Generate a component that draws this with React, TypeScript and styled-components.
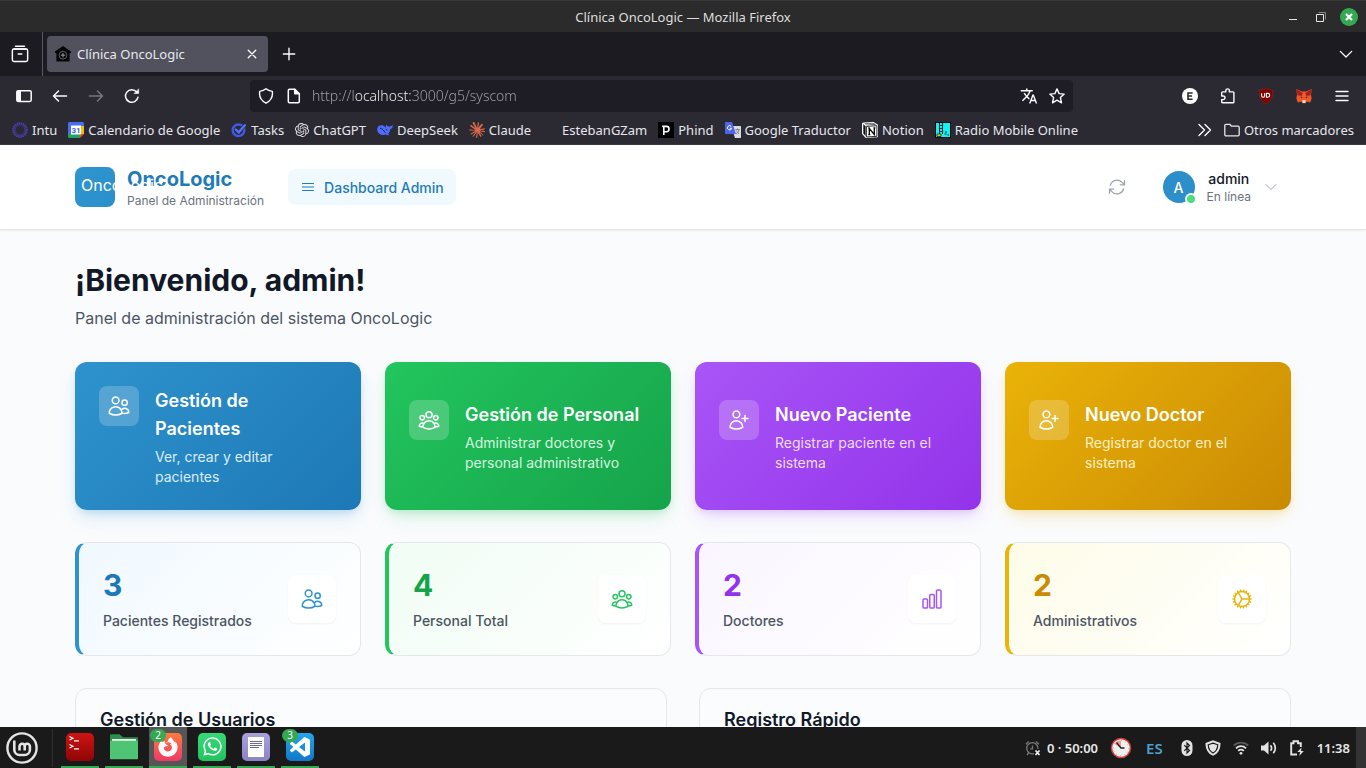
import React from "react";
import styled, { createGlobalStyle, css } from "styled-components";
import {
  HiOutlineArrowPath,
  HiOutlineBars3,
  HiOutlineChartBar,
  HiOutlineChevronDown,
  HiOutlineCog,
  HiOutlineUserGroup,
  HiOutlineUserPlus,
  HiOutlineUsers,
} from "react-icons/hi2";
import { FaFirefoxBrowser, FaWhatsapp } from "react-icons/fa";
import { MdTranslate } from "react-icons/md";
import { SiClaude, SiOpenai } from "react-icons/si";

const Global = createGlobalStyle`
  *, *::before, *::after { box-sizing: border-box; }
  body { margin: 0; background: #fafbfd; }
  button, input { font: inherit; color: inherit; }
  button { padding: 0; border: 0; background: none; cursor: pointer; }
  a { color: inherit; text-decoration: none; }
  h1, h2, h3, p { margin: 0; }
  svg { display: block; flex: none; }
`;

const systemFont = `"Noto Sans", "Open Sans", sans-serif`;

const Desktop = styled.div`
  display: flex;
  flex-direction: column;
  height: 100vh;
  overflow: hidden;
  font-family: ${systemFont};
`;

/* ---------- window title bar ---------- */

const TitleBar = styled.header`
  display: grid;
  grid-template-columns: 1fr auto 1fr;
  align-items: center;
  flex: none;
  height: 32px;
  background: #2b2b2b;
  border-top: 1px solid #3a3a3a;
  color: #dedede;
  font-size: 13px;
`;

const WindowTitle = styled.span`
  grid-column: 2;
  white-space: nowrap;
`;

const WindowButtons = styled.div`
  display: flex;
  justify-content: flex-end;
  align-items: center;
  gap: 10px;
  padding-right: 8px;
`;

const WindowButton = styled.button<{ $close?: boolean }>`
  display: grid;
  place-items: center;
  width: 18px;
  height: 18px;
  border-radius: 50%;
  color: #fff;
  background: ${(p) => (p.$close ? "#35a854" : "transparent")};
`;

/* ---------- browser chrome ---------- */

const TabStrip = styled.div`
  display: flex;
  align-items: center;
  flex: none;
  height: 44px;
  padding-right: 2px;
  background: #1c1b22;
  color: #fbfbfe;
`;

const ChromeButton = styled.button<{ $width: number; $dim?: boolean }>`
  display: grid;
  place-items: center;
  flex: none;
  width: ${(p) => p.$width}px;
  height: 32px;
  color: ${(p) => (p.$dim ? "#77767e" : "#fbfbfe")};
`;

const TabDivider = styled.span`
  width: 1px;
  height: 44px;
  margin: 0 4px 0 2px;
  background: #5a5962;
`;

const Tab = styled.div`
  display: flex;
  align-items: center;
  gap: 6px;
  width: 221px;
  height: 36px;
  padding: 0 8px;
  border-radius: 4px;
  background: #52525e;
  color: #e8e8ee;
  font-size: 13px;
`;

const TabTitle = styled.span`
  flex: 1;
  white-space: nowrap;
`;

const Spacer = styled.span`
  flex: 1;
`;

const NavBar = styled.div`
  display: flex;
  align-items: center;
  flex: none;
  height: 40px;
  padding: 0 5px 0 6px;
  background: #2b2a33;
`;

const UrlBar = styled.div`
  display: flex;
  align-items: center;
  flex: 1;
  height: 32px;
  margin: 0 98px 0 100px;
  padding: 0 2px;
  border-radius: 4px;
  background: #1e1d25;
  color: #fbfbfe;
`;

const UrlInput = styled.input`
  flex: 1;
  min-width: 0;
  height: 28px;
  margin-left: 4px;
  padding: 0 0 2px;
  border: 0;
  outline: 0;
  font-size: 14px;
  font-weight: 300;
  background: linear-gradient(90deg, #a3a2aa 43px, #fff 43px, #fff 99px, #a3a2aa 99px);
  background-clip: text;
  -webkit-background-clip: text;
  -webkit-text-fill-color: transparent;
`;

const BookmarkBar = styled.nav`
  display: flex;
  align-items: center;
  gap: 11px;
  flex: none;
  height: 29px;
  padding: 0 12px;
  background: #2b2a33;
  border-bottom: 1px solid #3a3942;
  color: #e6e6ec;
  font-size: 13px;
`;

const Bookmark = styled.a`
  display: flex;
  align-items: center;
  gap: 4px;
  white-space: nowrap;
`;

/* ---------- web page ---------- */

const Page = styled.div`
  flex: 1;
  min-height: 0;
  overflow: hidden;
  background: #fafbfd;
  color: #111827;
  font-family: Inter, sans-serif;
`;

const Container = styled.div`
  max-width: 1280px;
  margin: 0 auto;
  padding: 0 32px;
`;

const SiteHeader = styled.header`
  background: #fff;
  border-bottom: 1px solid #e5e7eb;
  box-shadow: 0 1px 2px rgba(0, 0, 0, 0.05);
`;

const HeaderRow = styled(Container)`
  display: flex;
  align-items: center;
  height: 84px;
`;

const Logo = styled.span`
  position: relative;
  z-index: 1;
  flex: none;
  width: 40px;
  height: 40px;
  padding: 6px;
  border-radius: 8px;
  background: linear-gradient(135deg, #2f95cf, #2a8fca);
  color: #fff;
  font-size: 16px;
  line-height: 24px;
  white-space: nowrap;
`;

const Brand = styled.div`
  margin: 0 24px 0 12px;
`;

const BrandName = styled.p`
  color: #1f7bb8;
  font-size: 20px;
  font-weight: 700;
  line-height: 28px;
`;

const Caption = styled.p`
  color: #6b7280;
  font-size: 12px;
  line-height: 16px;
`;

const DashboardLink = styled.a`
  display: flex;
  align-items: center;
  gap: 8px;
  height: 36px;
  padding: 0 12px;
  border-radius: 8px;
  background: #f0f9fe;
  color: #1f7bb8;
  font-size: 14px;
  font-weight: 500;
`;

const RefreshButton = styled.button`
  margin: 0 16px 0 auto;
  padding: 8px;
  color: #9ca3af;
`;

const UserButton = styled.button`
  display: flex;
  align-items: center;
  gap: 12px;
  padding: 0 12px;
  color: #9ca3af;
`;

const Avatar = styled.span`
  position: relative;
  display: grid;
  place-items: center;
  width: 32px;
  height: 32px;
  border-radius: 50%;
  background: #2c8fca;
  color: #fff;
  font-size: 14px;
  font-weight: 500;
`;

const OnlineDot = styled.span`
  position: absolute;
  right: -2px;
  bottom: -2px;
  width: 12px;
  height: 12px;
  border: 2px solid #fff;
  border-radius: 50%;
  background: #4ade80;
`;

const UserName = styled.p`
  color: #111827;
  font-size: 14px;
  font-weight: 500;
  line-height: 20px;
`;

const Main = styled(Container).attrs({ as: "main" })`
  padding-top: 32px;
`;

const Welcome = styled.h1`
  font-size: 30px;
  font-weight: 700;
  line-height: 36px;
`;

const Lead = styled.p`
  margin: 8px 0 32px;
  color: #4b5563;
  font-size: 16px;
  line-height: 24px;
`;

const CardGrid = styled.section<{ $columns: number; $gap: number }>`
  display: grid;
  grid-template-columns: repeat(${(p) => p.$columns}, 1fr);
  gap: ${(p) => p.$gap}px;
  margin-bottom: 32px;
`;

type Tone = "blue" | "green" | "purple" | "yellow";

const tones: Record<Tone, { main: string; deep: string; tint: string; soft: string; glow: string }> = {
  blue: { main: "#2e93cd", deep: "#1d78b6", tint: "#f0f9ff", soft: "#d9edfa", glow: "46, 147, 205" },
  green: { main: "#22c55e", deep: "#16a34a", tint: "#f0fdf4", soft: "#d3f7df", glow: "34, 197, 94" },
  purple: { main: "#a855f7", deep: "#9333ea", tint: "#faf5ff", soft: "#eedcff", glow: "168, 85, 247" },
  yellow: { main: "#eab308", deep: "#ca8a04", tint: "#fefce8", soft: "#fbf0c0", glow: "234, 179, 8" },
};

const ActionCard = styled.button<{ $tone: Tone }>`
  display: flex;
  align-items: center;
  padding: 24px 24px 23px;
  border-radius: 12px;
  text-align: left;
  color: #fff;
  ${({ $tone }) => css`
    background: linear-gradient(135deg, ${tones[$tone].main}, ${tones[$tone].deep});
    box-shadow: 0 4px 8px -2px rgba(${tones[$tone].glow}, 0.24), 0 10px 20px -4px rgba(${tones[$tone].glow}, 0.18);
  `}
`;

const ActionBody = styled.div`
  display: flex;
  align-items: flex-start;
  gap: 16px;
`;

const ActionIcon = styled.span`
  padding: 8px;
  border-radius: 8px;
  background: rgba(255, 255, 255, 0.2);
`;

const ActionCopy = styled.div`
  padding-top: 1px;
`;

const CardTitle = styled.h3`
  font-size: 18px;
  font-weight: 600;
  line-height: 28px;
`;

const ActionText = styled.p<{ $tone: Tone }>`
  margin-top: 4px;
  color: ${(p) => tones[p.$tone].soft};
  font-size: 14px;
  line-height: 20px;
`;

const StatCard = styled.article<{ $tone: Tone }>`
  display: flex;
  align-items: center;
  justify-content: space-between;
  padding: 24px;
  border: 1px solid #e5e7eb;
  border-left: 4px solid ${(p) => tones[p.$tone].main};
  border-radius: 12px;
  background: linear-gradient(135deg, ${(p) => tones[p.$tone].tint}, #fff);
`;

const StatValue = styled.p<{ $tone: Tone }>`
  color: ${(p) => tones[p.$tone].deep};
  font-size: 30px;
  font-weight: 700;
  line-height: 36px;
`;

const StatLabel = styled.p`
  margin-top: 8px;
  color: #4b5563;
  font-size: 14px;
  font-weight: 500;
  line-height: 20px;
`;

const StatIcon = styled.span<{ $tone: Tone }>`
  padding: 12px;
  border-radius: 8px;
  background: #fff;
  box-shadow: 0 1px 2px rgba(0, 0, 0, 0.05);
  color: ${(p) => tones[p.$tone].main};
`;

const Panel = styled.section`
  min-height: 240px;
  padding: 17px 24px;
  border: 1px solid #e5e7eb;
  border-radius: 12px;
  background: #fbfcfe;
`;

/* ---------- taskbar ---------- */

const Taskbar = styled.footer`
  display: flex;
  align-items: center;
  flex: none;
  height: 41px;
  background: #1a1a1a;
  color: #e6e6e6;
`;

const StartButton = styled.button`
  padding: 0 14px 0 6px;
`;

const TaskDivider = styled.span`
  width: 1px;
  height: 38px;
  margin-right: 8px;
  background: #303030;
`;

const Tasks = styled.div`
  display: flex;
  gap: 6px;
`;

const TaskButton = styled.button<{ $active?: boolean }>`
  position: relative;
  display: grid;
  place-items: center;
  width: 38px;
  height: 41px;
  border-bottom: 2px solid #35a854;
  background: ${(p) => (p.$active ? "#565656" : "transparent")};
`;

const AppTile = styled.span<{ $from: string; $to: string }>`
  display: grid;
  place-items: center;
  width: 28px;
  height: 28px;
  border-radius: 5px;
  background: linear-gradient(${(p) => p.$from}, ${(p) => p.$to});
  color: #fff;
`;

const Badge = styled.span`
  position: absolute;
  top: 2px;
  left: 1px;
  width: 16px;
  height: 13px;
  border-radius: 7px;
  background: #35a854;
  color: #fff;
  font-size: 10px;
  line-height: 13px;
  text-align: center;
`;

const Tray = styled.div`
  display: flex;
  align-items: center;
  align-self: stretch;
  gap: 12px;
  margin-left: auto;
  font-size: 13px;
  font-weight: 600;
`;

const TrayGroup = styled.span`
  display: flex;
  align-items: center;
  gap: 6px;
`;

const KeyboardLayout = styled.span`
  margin: 0 6px 0 2px;
  color: #4b9fcb;
  font-size: 15px;
`;

const ShowDesktop = styled.button`
  align-self: stretch;
  width: 10px;
  margin-left: -6px;
  background: #333;
`;

/* ---------- drawings ---------- */

type IconProps = { children: React.ReactNode; size?: number; weight?: number };

const Stroke = ({ children, size = 16, weight = 1.4 }: IconProps) => (
  <svg
    width={size}
    height={size}
    viewBox="0 0 16 16"
    fill="none"
    stroke="currentColor"
    strokeWidth={weight}
    strokeLinecap="round"
    strokeLinejoin="round"
    aria-hidden="true"
  >
    {children}
  </svg>
);

const Archive = () => (
  <Stroke size={18} weight={1.3}>
    <path d="M4 1.2h8M2.6 3.6h10.8" />
    <path d="M2.6 3.6h10.8c.8 0 1.4.6 1.4 1.4v8.2c0 .9-.6 1.5-1.4 1.5H2.6c-.8 0-1.4-.6-1.4-1.5V5c0-.8.6-1.4 1.4-1.4z" />
    <path d="M6.4 8h3.2" />
  </Stroke>
);

const Favicon = () => (
  <svg width="16" height="16" viewBox="0 0 16 16" aria-hidden="true">
    <path d="M8 0 0 5.600V7h1.400v8.600h13.200V7H16V5.600z" fill="#050507" />
    <circle cx="8" cy="9.200" r="3.900" fill="none" stroke="#6d6d77" strokeWidth=".8" />
    <path d="M8 7v4.400M5.800 9.200h4.400" fill="none" stroke="#9a9aa4" strokeWidth="1" />
  </svg>
);

const Sidebar = () => (
  <svg width="16" height="16" viewBox="0 0 16 16" aria-hidden="true">
    <rect x=".8" y="2.800" width="14.400" height="10.600" rx="1.300" fill="none" stroke="#fbfbfe" strokeWidth="1.500" />
    <path d="M1 3h4v10H1z" fill="#fbfbfe" />
  </svg>
);

const Arrow = ({ forward }: { forward?: boolean }) => (
  <Stroke weight={1.5}>
    {forward ? <path d="M1.500 8h13M9.500 3l5 5-5 5" /> : <path d="M14.500 8h-13M6.500 3l-5 5 5 5" />}
  </Stroke>
);

const Reload = () => (
  <Stroke weight={1.5}>
    <path d="M14 9.200A6.300 6.300 0 1 1 12.700 4" />
    <path d="M14.700 1.200v4.300h-4.300z" fill="currentColor" strokeWidth=".6" />
  </Stroke>
);

const ShieldOutline = () => (
  <Stroke weight={1.4}>
    <path d="M8 .8c1.700 1.500 4.200 2.300 6.300 2.600.7 4.600-.7 9-6.300 11.800C2.400 12.400 1 8 1.700 3.400 3.800 3.100 6.300 2.300 8 .8z" />
  </Stroke>
);

const PageOutline = () => (
  <Stroke weight={1.5}>
    <path d="M3.500 1.300h5.200L13.300 5.800v7.700c0 .7-.5 1.200-1.200 1.200H3.500c-.7 0-1.200-.5-1.200-1.200v-11c0-.7.5-1.200 1.200-1.200z" />
    <path d="M8.700 1.300v4.500h4.600z" fill="currentColor" />
  </Stroke>
);

const Star = () => (
  <Stroke weight={1.4}>
    <path d="M8 .9l2.100 4.700 5.100.5-3.800 3.500 1.100 5.200L8 12.200l-4.500 2.600 1.100-5.200L.8 6.100l5.100-.5z" />
  </Stroke>
);

const AccountDot = () => (
  <svg width="16" height="16" viewBox="0 0 16 16" aria-hidden="true">
    <circle cx="8" cy="8" r="8" fill="#fff" />
    <path d="M10.600 5H6v6.200h4.600M6 8h4" fill="none" stroke="#2b2a33" strokeWidth="1.600" />
  </svg>
);

const Puzzle = () => (
  <Stroke weight={1.4}>
    <path d="M1.700 8V4.800c0-.5.4-.9.900-.9h3.200V2.700a1.800 1.800 0 0 1 3.600 0v1.200h3.600c.5 0 .9.400.9.900v9.100c0 .5-.4.900-.9.900H2.600c-.5 0-.9-.4-.9-.9v-2.300h1.500a1.800 1.800 0 0 0 0-3.600z" />
  </Stroke>
);

const UBlock = () => (
  <svg width="16" height="16" viewBox="0 0 16 16" aria-hidden="true">
    <path d="M8 .2c2 1.300 4.400 1.700 6.700 1.700C15 8.500 13.500 12.800 8 15.800 2.500 12.800 1 8.500 1.300 1.900 3.600 1.900 6 1.500 8 .2z" fill="#800000" stroke="#a31d22" strokeWidth=".6" />
    <path d="M3.600 5.200v2.600a1.500 1.500 0 0 0 3 0V5.200M8.400 5.400v3.800h1.400a1.900 1.900 0 0 0 0-3.800z" fill="none" stroke="#fff" strokeWidth="1.100" />
  </svg>
);

const Fox = () => (
  <svg width="16" height="16" viewBox="0 0 16 16" aria-hidden="true">
    <path d="M.4.900 6 3.600h4L15.600.9 15 7l.6 3.500-1.400 4-3.500-.9-1.400 1.700H6.700l-1.400-1.700-3.500.9-1.400-4L1 7z" fill="#f0582a" />
    <path d="M.4.900 6.600 5l-.9 3L1.500 7.200zM15.600.9 9.400 5l.9 3 4.200-.8z" fill="#a81f1c" />
    <path d="M4.800 8.200l1.800 1.500-1.800.3zM11.200 8.200 9.400 9.700l1.800.3z" fill="#2a2320" />
    <path d="M6.200 12.300h3.600l-.5 2.700H6.700z" fill="#e0dcd8" />
  </svg>
);

const Menu = () => (
  <Stroke weight={1.4}>
    <path d="M2 3.500h12M2 8h12M2 12.500h12" />
  </Stroke>
);

const IntuMark = () => (
  <svg width="16" height="16" viewBox="0 0 16 16" fill="none" aria-hidden="true">
    <circle cx="8" cy="8" r="6.500" stroke="#4a40ab" strokeWidth="2.600" strokeDasharray="1.400 .642" />
    <circle cx="8" cy="8" r="4.900" stroke="#3c348c" strokeWidth="1" />
  </svg>
);

const CalendarMark = () => (
  <svg width="16" height="16" viewBox="0 0 16 16" aria-hidden="true">
    <path d="M1.500 0h13C15.400 0 16 .6 16 1.500V4H4v8H0V1.500C0 .6.600 0 1.500 0z" fill="#4a6cf0" />
    <path d="M12 4h4v8h-4z" fill="#fbbc04" />
    <path d="M0 12h12v4H1.500C.6 16 0 15.400 0 14.500z" fill="#1fa463" />
    <path d="M12 12h4l-4 4z" fill="#ea4335" />
    <path d="M3 3.500h10v9H3z" fill="#fff" />
    <text x="8" y="10.700" textAnchor="middle" fontFamily="Roboto, sans-serif" fontSize="8" fontWeight="700" fill="#3567dd">31</text>
  </svg>
);

const TasksMark = () => (
  <svg width="16" height="16" viewBox="0 0 16 16" fill="none" aria-hidden="true">
    <circle cx="7.500" cy="8.300" r="5.800" stroke="#4058e8" strokeWidth="2.400" />
    <path d="M5 7.500l2.700 2.800 6.200-7" stroke="#2b2a33" strokeWidth="3.600" />
    <path d="M4.800 7.500l2.900 2.900 6.200-7.200" stroke="#5470f4" strokeWidth="2.400" strokeLinecap="round" />
  </svg>
);

const WhaleMark = () => (
  <svg width="16" height="16" viewBox="0 0 16 16" aria-hidden="true">
    <path d="M.2 7.200C.2 4.300 2.400 2.900 5 3.200c1.500.2 2.500 1 3.700 2.200.2-1 0-2 .6-2.800.5 1.400 1.400 1.900 2.900 1.900 1.500 0 2.300-.9 3.700-1.300-.1 2.300-1 3.600-2.800 4.200-.1 1.900-.9 3.200-2.100 4.300l1.300 1.300c-1.300.4-2.300.2-3.200-.4C4.600 13.900.2 11.600.2 7.200z" fill="#4d6bfe" />
    <path d="M3 6.300c1.900-.2 4 2.300 5.400 4.600M8.800 7.300c.7.100 1.100.5 1.300 1.200" fill="none" stroke="#2b2a33" strokeWidth="1" />
  </svg>
);

const PhindMark = () => (
  <svg width="16" height="16" viewBox="0 0 16 16" aria-hidden="true">
    <path d="M0 0h16v16H0z" fill="#000" />
    <path d="M5.800 13V4.400h2.600a2.600 2.600 0 0 1 0 5.300H5.800M4.200 4.400h2" fill="none" stroke="#fff" strokeWidth="1.600" />
  </svg>
);

const TranslateMark = () => (
  <svg width="16" height="16" viewBox="0 0 16 16" aria-hidden="true">
    <path d="M6 4h9.300c.4 0 .7.300.7.700V15.300c0 .4-.3.700-.7.700H10z" fill="#dcdde3" />
    <path d="M1 0h6l4 12H1c-.6 0-1-.4-1-1V1c0-.6.4-1 1-1z" fill="#4f64ee" />
    <path d="M6.300 4.600A2.100 2.100 0 1 0 6.600 6.300H4.800" fill="none" stroke="#fff" strokeWidth="1" />
    <path d="M10.300 7.500h4.500M12.500 6.500v1M14 7.800c-.4 2-1.700 3.500-3 4.300M11.200 8.500l3 3.500" fill="none" stroke="#6d7076" strokeWidth=".8" />
  </svg>
);

const NotionMark = () => (
  <svg width="16" height="16" viewBox="0 0 16 16" aria-hidden="true">
    <path d="M1.500.6 11.600 0 15.600 2.600c.3.200.4.400.4.700v11c0 .6-.4 1-1 1L4.400 16c-.5 0-.8-.1-1.100-.5L.4 12.200C.1 11.900 0 11.600 0 11.200V2C0 1.200.6.700 1.500.6z" fill="#fff" />
    <path d="M1.300 2l2.300 2.300V14L1.300 11.400zM2.500 1.600l9-.6 2.600 1.700-9.700.6z" fill="#151515" />
    <path d="M2.600 2l8.700-.5 1.400.8-8.100.5z" fill="#fff" />
    <path d="M4.400 4.400 14.900 3.700v10.600L4.400 15z" fill="#fff" stroke="#151515" strokeWidth=".9" />
    <path d="M7.300 12.800V6.500l5 6V5.600M6.300 6.200h1.700M11.400 5.800h2M6.300 12.700h2" fill="none" stroke="#050505" strokeWidth="1.300" />
  </svg>
);

const RadioMark = () => (
  <svg width="16" height="16" viewBox="0 0 16 16" aria-hidden="true">
    <path d="M0 0h16v16H0z" fill="#0a0a0a" />
    <path d="M1 1h14v14H1z" fill="#12f3f6" />
    <path d="M4.500 1v11M7.500 1v11M4.500 3.500h3M4.500 6.500h3M4.500 9.500h3M11 9v2M9.500 12h2M12.500 13h1.500" stroke="#06282a" strokeWidth="1.100" fill="none" />
    <path d="M2 12h4v2.500H2z" fill="#d6d32b" stroke="#111" strokeWidth=".7" />
  </svg>
);

const FolderOutline = () => (
  <Stroke weight={1.3}>
    <path d="M2 2.300h3.800l1.700 1.900H14c.7 0 1.200.5 1.200 1.200v7.200c0 .7-.5 1.200-1.200 1.200H2c-.7 0-1.200-.5-1.200-1.200V3.500c0-.7.5-1.200 1.200-1.200z" />
  </Stroke>
);

const MintMark = () => (
  <svg width="32" height="32" viewBox="0 0 32 32" fill="none" stroke="#e4e4e4" aria-hidden="true">
    <circle cx="16" cy="16" r="14.600" strokeWidth="2.400" />
    <path d="M8.300 8.500v9.200a5.300 5.300 0 0 0 5.300 5.300h5a5.300 5.300 0 0 0 5.300-5.300v-3.300a2.500 2.500 0 0 0-5.200 0v4M18.700 18.400v-4a2.500 2.500 0 0 0-5.200 0v4" strokeWidth="2.600" />
  </svg>
);

const PromptGlyph = () => (
  <svg width="28" height="28" viewBox="0 0 28 28" fill="none" stroke="#fff" strokeWidth="1.200" aria-hidden="true">
    <path d="M3.500 3.500 7 5.200 3.500 7M8 7.800h5M3.500 11.500 7 13.200 3.500 15M8 15.800h5" />
  </svg>
);

const FilesMark = () => (
  <svg width="28" height="28" viewBox="0 0 28 28" aria-hidden="true">
    <path d="M0 2.500c0-.8.500-1.300 1.300-1.300h8.200l3.500 3h13.700c.8 0 1.300.5 1.300 1.300V12H0z" fill="#2c8f4c" />
    <path d="M2 6h24v4H2z" fill="#f3f3f3" />
    <path d="M0 7.800h28v17.400c0 .6-.4 1-1 1H1c-.6 0-1-.4-1-1z" fill="#4fc474" />
  </svg>
);

const NotesGlyph = () => (
  <svg width="28" height="28" viewBox="0 0 28 28" aria-hidden="true">
    <path d="M6 4h16v20H6z" fill="#fff" />
    <path d="M8 8.500h12M8 10.500h12M8 12.500h12M8 14.500h9" stroke="#6b6790" strokeWidth="1" />
  </svg>
);

const CodeGlyph = () => (
  <svg width="20" height="20" viewBox="0 0 24 24" fill="#fff" aria-hidden="true">
    <path d="M23.150 2.587L18.210.210a1.494 1.494 0 0 0-1.705.290l-9.460 8.630-4.120-3.128a.999.999 0 0 0-1.276.057L.327 7.261A1 1 0 0 0 .326 8.740L3.899 12 .326 15.260a1 1 0 0 0 .001 1.479L1.650 17.940a.999.999 0 0 0 1.276.057l4.120-3.128 9.460 8.630a1.492 1.492 0 0 0 1.704.290l4.942-2.377A1.500 1.500 0 0 0 24 20.060V3.939a1.500 1.500 0 0 0-.850-1.352zm-5.146 14.861L10.826 12l7.178-5.448v10.896z" />
  </svg>
);

const AlarmOff = () => (
  <svg width="16" height="16" viewBox="0 0 16 16" fill="none" stroke="#77777a" strokeWidth="1.300" aria-hidden="true">
    <path d="M9 13.600A5.600 5.600 0 1 1 12.900 9M7.500 5.500v3.300H5M.8 4.300 3.700 1.500M11 1.500l3 2.800M3.500 13 2 15" />
    <path d="M10.500 10.500l4 4.500M14.500 10.500l-4 4.500" stroke="#f2f2f2" strokeWidth="1.700" />
  </svg>
);

const ClockMark = () => (
  <svg width="22" height="22" viewBox="0 0 22 22" aria-hidden="true">
    <circle cx="11" cy="11" r="9.500" fill="#efefed" stroke="#d23c3b" strokeWidth="1.500" />
    <path d="M11 11 4.500 7A7.500 7.500 0 0 1 11 3.500z" fill="#f09a9d" />
    <path d="M6.500 5.500 11 11h3.500" stroke="#222" strokeWidth="1.300" fill="none" />
    <circle cx="11" cy="11" r="7.600" fill="none" stroke="#888" strokeWidth=".8" strokeDasharray=".8 3.180" />
  </svg>
);

const Bluetooth = () => (
  <svg width="12" height="16" viewBox="0 0 12 16" aria-hidden="true">
    <rect x=".5" width="11" height="16" rx="5.500" fill="#e3e3e3" />
    <path d="M3.300 5.200l5.200 5.300L6 13V3l2.500 2.500-5.200 5.300" fill="none" stroke="#1a1a1a" strokeWidth="1.200" />
  </svg>
);

const TrayShield = () => (
  <svg width="16" height="16" viewBox="0 0 16 16" aria-hidden="true">
    <path d="M8 .3 15.500 3C15.500 9 13.500 13.500 8 15.700 2.500 13.500.5 9 .5 3z" fill="#e3e3e3" />
    <path d="M8 3.100 12.800 4.800C12.600 8.800 11.200 11.500 8 13 4.800 11.500 3.400 8.800 3.200 4.800z" fill="#e3e3e3" stroke="#1a1a1a" strokeWidth="1.200" />
  </svg>
);

const Wifi = () => (
  <svg width="16" height="16" viewBox="0 0 16 16" fill="none" strokeWidth="1.800" aria-hidden="true">
    <path d="M.8 5.500a10.300 10.300 0 0 1 14.400 0" stroke="#5a5a5a" />
    <path d="M3 8.300a7 7 0 0 1 10 0M5.200 10.900a4 4 0 0 1 5.600 0" stroke="#e3e3e3" />
    <circle cx="8" cy="13.300" r="1.400" fill="#e3e3e3" />
  </svg>
);

const Volume = () => (
  <svg width="16" height="16" viewBox="0 0 16 16" fill="none" stroke="#e3e3e3" strokeWidth="1.700" aria-hidden="true">
    <path d="M0 5.500h3L7.500 1.500v13L3 10.500H0z" fill="#e3e3e3" stroke="none" />
    <path d="M9.500 5.200c1.300 1.600 1.300 4 0 5.600M12.300 2.800c2.700 3 2.700 7.400 0 10.400" />
  </svg>
);

const Battery = () => (
  <svg width="16" height="16" viewBox="0 0 16 16" aria-hidden="true">
    <path d="M8 14.500H2.200V3.200H4.500V1.200h4.500v2h2.800V7" fill="none" stroke="#e3e3e3" strokeWidth="1.900" />
    <path d="M12.500 7.500 8.300 12h2.900l-1 4 4.600-5H12z" fill="#e3e3e3" />
  </svg>
);

/* ---------- content ---------- */

const bookmarks: { label: string; icon: React.ReactNode }[] = [
  { label: "Intu", icon: <IntuMark /> },
  { label: "Calendario de Google", icon: <CalendarMark /> },
  { label: "Tasks", icon: <TasksMark /> },
  { label: "ChatGPT", icon: <SiOpenai size={14} color="#e3e3e8" /> },
  { label: "DeepSeek", icon: <WhaleMark /> },
  { label: "Claude", icon: <SiClaude size={16} color="#d9694a" /> },
  { label: "EstebanGZam", icon: <svg width="16" height="16" aria-hidden="true" /> },
  { label: "Phind", icon: <PhindMark /> },
  { label: "Google Traductor", icon: <TranslateMark /> },
  { label: "Notion", icon: <NotionMark /> },
  { label: "Radio Mobile Online", icon: <RadioMark /> },
];

const actions = [
  { tone: "blue" as Tone, Icon: HiOutlineUsers, title: "Gestión de Pacientes", text: "Ver, crear y editar pacientes" },
  { tone: "green" as Tone, Icon: HiOutlineUserGroup, title: "Gestión de Personal", text: "Administrar doctores y personal administrativo" },
  { tone: "purple" as Tone, Icon: HiOutlineUserPlus, title: "Nuevo Paciente", text: "Registrar paciente en el sistema" },
  { tone: "yellow" as Tone, Icon: HiOutlineUserPlus, title: "Nuevo Doctor", text: "Registrar doctor en el sistema" },
];

const stats = [
  { tone: "blue" as Tone, Icon: HiOutlineUsers, value: 3, label: "Pacientes Registrados" },
  { tone: "green" as Tone, Icon: HiOutlineUserGroup, value: 4, label: "Personal Total" },
  { tone: "purple" as Tone, Icon: HiOutlineChartBar, value: 2, label: "Doctores" },
  { tone: "yellow" as Tone, Icon: HiOutlineCog, value: 2, label: "Administrativos" },
];

export default function App() {
  return (
    <Desktop>
      <Global />
      <TitleBar>
        <WindowTitle>Clínica OncoLogic — Mozilla Firefox</WindowTitle>
        <WindowButtons>
          <WindowButton aria-label="Minimizar">
            <svg width="10" height="10" viewBox="0 0 10 10"><path d="M1 7.500h8" stroke="#e8e8e8" /></svg>
          </WindowButton>
          <WindowButton aria-label="Restaurar">
            <svg width="10" height="10" viewBox="0 0 10 10" fill="none">
              <path d="M2.500.500h7v7" stroke="#8a8a8a" />
              <path d="M.500 2.500h7v7h-7z" stroke="#e8e8e8" />
            </svg>
          </WindowButton>
          <WindowButton $close aria-label="Cerrar">
            <svg width="10" height="10" viewBox="0 0 10 10"><path d="M2 2l6 6M8 2 2 8" stroke="#fff" strokeWidth="2.200" /></svg>
          </WindowButton>
        </WindowButtons>
      </TitleBar>

      <TabStrip>
        <ChromeButton $width={40} aria-label="Vista de pestañas"><Archive /></ChromeButton>
        <TabDivider />
        <Tab>
          <Favicon />
          <TabTitle>Clínica OncoLogic</TabTitle>
          <ChromeButton $width={16} aria-label="Cerrar pestaña">
            <Stroke size={10} weight={2.2}><path d="M2 2l12 12M14 2 2 14" /></Stroke>
          </ChromeButton>
        </Tab>
        <ChromeButton $width={42} aria-label="Nueva pestaña">
          <Stroke size={14} weight={1.6}><path d="M8 1.500v13M1.500 8h13" /></Stroke>
        </ChromeButton>
        <Spacer />
        <ChromeButton $width={36} aria-label="Listar pestañas">
          <Stroke size={14} weight={1.5}><path d="M1.500 5 8 11.500 14.500 5" /></Stroke>
        </ChromeButton>
      </TabStrip>

      <NavBar>
        <ChromeButton $width={36} aria-label="Barra lateral"><Sidebar /></ChromeButton>
        <ChromeButton $width={36} aria-label="Atrás"><Arrow /></ChromeButton>
        <ChromeButton $width={36} $dim aria-label="Adelante"><Arrow forward /></ChromeButton>
        <ChromeButton $width={36} aria-label="Recargar"><Reload /></ChromeButton>
        <UrlBar>
          <ChromeButton $width={28} aria-label="Protección"><ShieldOutline /></ChromeButton>
          <ChromeButton $width={28} aria-label="Información del sitio"><PageOutline /></ChromeButton>
          <UrlInput aria-label="Dirección" defaultValue="http://localhost:3000/g5/syscom" />
          <ChromeButton $width={28} aria-label="Traducir"><MdTranslate size={18} /></ChromeButton>
          <ChromeButton $width={28} aria-label="Añadir a marcadores"><Star /></ChromeButton>
        </UrlBar>
        <ChromeButton $width={38} aria-label="Cuenta"><AccountDot /></ChromeButton>
        <ChromeButton $width={38} aria-label="Extensiones"><Puzzle /></ChromeButton>
        <ChromeButton $width={38} aria-label="uBlock"><UBlock /></ChromeButton>
        <ChromeButton $width={38} aria-label="MetaMask"><Fox /></ChromeButton>
        <ChromeButton $width={38} aria-label="Menú"><Menu /></ChromeButton>
      </NavBar>

      <BookmarkBar>
        {bookmarks.map((b) => (
          <Bookmark key={b.label} href="#">
            {b.icon}
            {b.label}
          </Bookmark>
        ))}
        <Spacer />
        <ChromeButton $width={16} aria-label="Más marcadores">
          <Stroke weight={1.4}><path d="M2 2.500 7.500 8 2 13.500M8 2.500 13.500 8 8 13.500" /></Stroke>
        </ChromeButton>
        <Bookmark href="#">
          <FolderOutline />
          Otros marcadores
        </Bookmark>
      </BookmarkBar>

      <Page>
        <SiteHeader>
          <HeaderRow>
            <Logo>OncoLogic</Logo>
            <Brand>
              <BrandName>OncoLogic</BrandName>
              <Caption>Panel de Administración</Caption>
            </Brand>
            <DashboardLink href="#">
              <HiOutlineBars3 size={16} />
              Dashboard Admin
            </DashboardLink>
            <RefreshButton aria-label="Actualizar"><HiOutlineArrowPath size={20} /></RefreshButton>
            <UserButton>
              <Avatar>A<OnlineDot /></Avatar>
              <div>
                <UserName>admin</UserName>
                <Caption>En línea</Caption>
              </div>
              <HiOutlineChevronDown size={16} />
            </UserButton>
          </HeaderRow>
        </SiteHeader>

        <Main>
          <Welcome>¡Bienvenido, admin!</Welcome>
          <Lead>Panel de administración del sistema OncoLogic</Lead>

          <CardGrid $columns={4} $gap={24}>
            {actions.map(({ tone, Icon, title, text }) => (
              <ActionCard key={title} $tone={tone}>
                <ActionBody>
                  <ActionIcon><Icon size={24} /></ActionIcon>
                  <ActionCopy>
                    <CardTitle>{title}</CardTitle>
                    <ActionText $tone={tone}>{text}</ActionText>
                  </ActionCopy>
                </ActionBody>
              </ActionCard>
            ))}
          </CardGrid>

          <CardGrid $columns={4} $gap={24}>
            {stats.map(({ tone, Icon, value, label }) => (
              <StatCard key={label} $tone={tone}>
                <div>
                  <StatValue $tone={tone}>{value}</StatValue>
                  <StatLabel>{label}</StatLabel>
                </div>
                <StatIcon $tone={tone}><Icon size={24} /></StatIcon>
              </StatCard>
            ))}
          </CardGrid>

          <CardGrid $columns={2} $gap={32}>
            <Panel><CardTitle>Gestión de Usuarios</CardTitle></Panel>
            <Panel><CardTitle>Registro Rápido</CardTitle></Panel>
          </CardGrid>
        </Main>
      </Page>

      <Taskbar>
        <StartButton aria-label="Menú de inicio"><MintMark /></StartButton>
        <TaskDivider />
        <Tasks>
          <TaskButton aria-label="Terminal">
            <AppTile $from="#d01313" $to="#8f0505"><PromptGlyph /></AppTile>
          </TaskButton>
          <TaskButton aria-label="Archivos"><FilesMark /></TaskButton>
          <TaskButton $active aria-label="Firefox">
            <AppTile $from="#ff7a3c" $to="#ee3a68"><FaFirefoxBrowser size={20} /></AppTile>
            <Badge>2</Badge>
          </TaskButton>
          <TaskButton aria-label="WhatsApp">
            <AppTile $from="#35da78" $to="#20c35d"><FaWhatsapp size={21} /></AppTile>
          </TaskButton>
          <TaskButton aria-label="Notas">
            <AppTile $from="#a9a0dc" $to="#8d84c6"><NotesGlyph /></AppTile>
          </TaskButton>
          <TaskButton aria-label="Visual Studio Code">
            <AppTile $from="#22a7ee" $to="#1178c8"><CodeGlyph /></AppTile>
            <Badge>3</Badge>
          </TaskButton>
        </Tasks>
        <Tray>
          <TrayGroup><AlarmOff />0 · 50:00</TrayGroup>
          <ClockMark />
          <KeyboardLayout>ES</KeyboardLayout>
          <Bluetooth />
          <TrayShield />
          <Wifi />
          <Volume />
          <Battery />
          <span>11:38</span>
          <ShowDesktop aria-label="Mostrar escritorio" />
        </Tray>
      </Taskbar>
    </Desktop>
  );
}
